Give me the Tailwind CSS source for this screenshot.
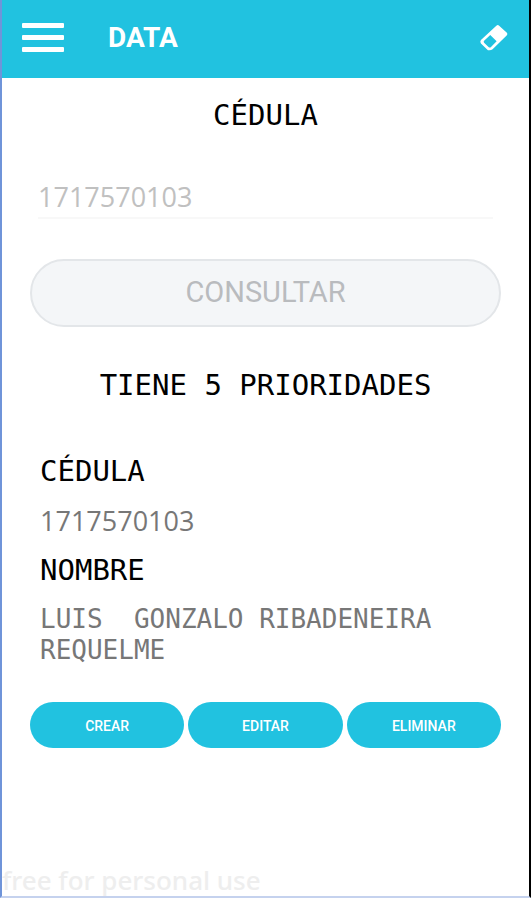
<!DOCTYPE html>
<html lang="es">
<head>
    <meta charset="UTF-8">
    <meta name="viewport" content="width=device-width, initial-scale=1.0">
    <title>Data</title>
    <script src="https://cdn.jsdelivr.net/npm/@tailwindcss/browser@4"></script>
</head>
<body class="bg-white">
    <div class="min-h-screen flex flex-col pb-0.5">
        <div class="flex-1 flex flex-col border-2 border-t-0 border-l-[#6f94d9] border-r-black border-b-[#c5d2ee]">
            <header class="h-[78px] bg-[#21c2e0] flex items-center pl-5 pr-5 pb-0.5">
                <button type="button" aria-label="Menú" class="text-white">
                    <svg class="w-[42px] h-[30px]" viewBox="0 0 42 30" fill="currentColor">
                        <rect x="0" y="0" width="42" height="5" rx="1"/>
                        <rect x="0" y="12" width="42" height="5" rx="1"/>
                        <rect x="0" y="24" width="42" height="5" rx="1"/>
                    </svg>
                </button>
                <h1 class="ml-11 font-[Roboto,sans-serif] font-bold text-[28px] leading-9 text-white">DATA</h1>
                <button type="button" aria-label="Borrar" class="ml-auto text-white">
                    <svg class="w-[30px] h-7" viewBox="0 0 32 30">
                        <path d="M18.5 1.8 Q20 0.4 21.5 1.8 L29.8 9.3 Q31 10.6 29.8 12 L14.5 27 Q12.5 28.6 9.5 28 L2 20.8 Q0.6 19 2 17.2 Z M5.4 18 Q4.4 19.2 5.4 20.2 L10.4 24.8 Q11.6 25.6 12.8 24.6 L18.8 18.6 L12 11.8 Z" fill="currentColor" fill-rule="evenodd"/>
                    </svg>
                </button>
            </header>

            <main class="px-7 pt-[17px] font-['DejaVu_Sans_Mono',monospace]">
                <label for="cedula" class="block text-center text-[29px] leading-10 text-black">CÉDULA</label>
                <div class="mt-10 px-2">
                    <input type="text" id="cedula" value="1717570103" disabled class="block w-full h-11 border-b-2 border-[#f8f8f8] font-['Open_Sans',sans-serif] text-[27px] leading-10 text-[#c0c0c0]">
                </div>
                <button type="button" disabled class="block mt-10 w-full h-[68px] rounded-full border-2 border-[#e3e6e9] bg-[#f4f6f8] font-[Roboto,sans-serif] text-[29px] text-[#b9bbbe]">CONSULTAR</button>

                <h2 class="mt-[38px] text-center text-[29px] leading-10 text-black">TIENE 5 PRIORIDADES</h2>

                <dl class="mt-[46px] px-2.5">
                    <dt class="text-[29px] leading-10 text-black">CÉDULA</dt>
                    <dd class="mt-3.5 font-['Open_Sans',sans-serif] text-[27px] leading-[31px] text-[#777777]">1717570103</dd>
                    <dt class="mt-3.5 text-[29px] leading-10 text-black">NOMBRE</dt>
                    <dd class="mt-3.5 whitespace-pre-wrap text-[26px] leading-[31px] text-[#777777]">LUIS  GONZALO RIBADENEIRA REQUELME</dd>
                </dl>

                <div class="mt-9 grid grid-cols-3 gap-1 font-[Roboto,sans-serif] font-medium text-[14px] text-white">
                    <button type="button" class="h-[46px] pt-0.5 rounded-full bg-[#21c2e0]">CREAR</button>
                    <button type="button" class="h-[46px] pt-0.5 rounded-full bg-[#21c2e0]">EDITAR</button>
                    <button type="button" class="h-[46px] pt-0.5 rounded-full bg-[#21c2e0]">ELIMINAR</button>
                </div>
            </main>

            <footer class="mt-auto font-['Noto_Sans',sans-serif] font-medium text-[26px] leading-8 text-[#eeeeee]">free for personal use</footer>
        </div>
    </div>
</body>
</html>
